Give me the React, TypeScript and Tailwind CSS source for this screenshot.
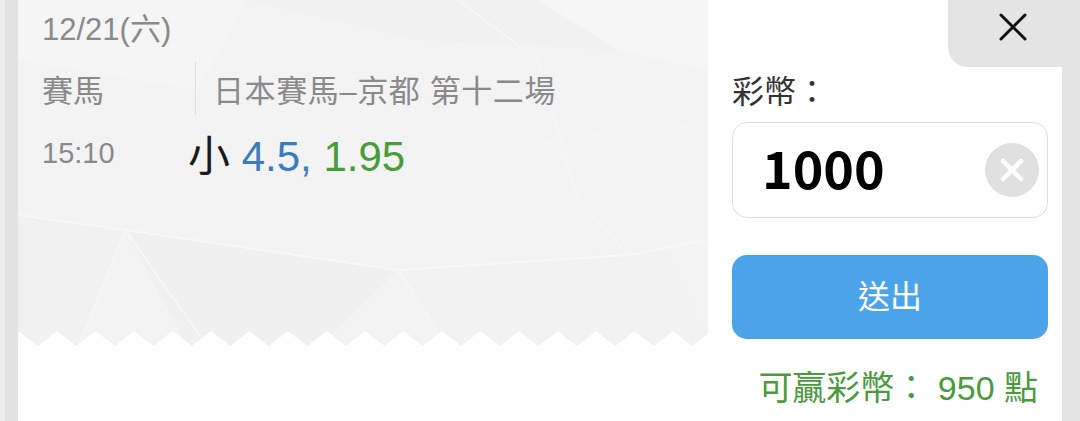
import React from 'react';

const zigzag = () => {
  // white teeth cut into the bottom of the ticket
  const w = 690;
  const period = 38.5;
  const first = 39;
  let d = 'M0 16 L0 15';
  for (let x = first - period; x < w + period; x += period) {
    d += ` L${x.toFixed(1)} 0 L${(x + period / 2).toFixed(1)} 15`;
  }
  d += ` L${w} 16 Z`;
  return d;
};

const Ticket: React.FC = () => (
  <div className="relative w-[690px] h-[347px] bg-[#f3f3f3] overflow-hidden">
    {/* faint polygon background */}
    <svg className="absolute inset-0" width="690" height="347" viewBox="0 0 690 347">
      <polygon points="0,0 230,0 180,90 0,60" fill="#f5f5f5" />
      <polygon points="230,0 520,0 600,50 400,40" fill="#f1f1f1" />
      <polygon points="520,0 690,0 690,70 600,50" fill="#f6f6f6" />
      <polygon points="0,215 107,230 60,347 0,347" fill="#f1f1f1" />
      <polygon points="107,230 380,270 300,347 170,347" fill="#f0f0f0" />
      <polygon points="380,270 650,250 690,347 430,347" fill="#f2f2f2" />
      <polygon points="520,140 690,120 690,250 650,250" fill="#f4f4f4" />
      <polyline points="0,215 107,230 380,270 610,255 690,240" fill="none" stroke="#f7f7f7" strokeWidth="2" />
      <polyline points="60,347 107,230 190,347" fill="none" stroke="#f6f6f6" strokeWidth="2" />
      <polyline points="380,270 430,347" fill="none" stroke="#f6f6f6" strokeWidth="2" />
      <polyline points="440,0 520,60 560,200 610,255" fill="none" stroke="#f6f6f6" strokeWidth="1.5" />
    </svg>
    <svg className="absolute left-0 bottom-0" width="690" height="16" viewBox="0 0 690 16">
      <path d={zigzag()} fill="#ffffff" strokeLinejoin="round" />
    </svg>

    <div className="relative flex flex-col pl-[24px] pt-[12px] text-[#8a8a8a]">
      <div className="text-[31px] leading-[36px]">12/21(六)</div>
      <div className="flex items-center h-[53px] mt-[14px]">
        <span className="w-[153px] text-[31px] leading-[36px] pt-[6px]">賽馬</span>
        <span className="w-px h-[53px] bg-[#dcdcdc]" />
        <span className="ml-[17px] text-[31px] leading-[36px] pt-[6px] tracking-[0.6px]">日本賽馬–京都 第十二場</span>
      </div>
      <div className="flex mt-[20px]">
        <span className="w-[146px] text-[29px] leading-[36px]">15:10</span>
        <span className="text-[42px] leading-[48px] -mt-[2px]">
          <span className="text-[#1a1a1a]">小</span>{' '}
          <span className="text-[#3b7bbf]">4.5,</span>{' '}
          <span className="text-[#4a9b3c]">1.95</span>
        </span>
      </div>
    </div>
  </div>
);

const App: React.FC = () => {
  return (
    <div className="w-[1080px] h-[421px] flex bg-[#e4e4e4] overflow-hidden font-['Liberation_Sans','Noto_Sans_CJK_TC',sans-serif]">
      <div className="w-[18px] h-full bg-[#e2e2e2] border-l-[5px] border-[#ececec]" />
      <div className="relative flex-1 flex bg-white">
        <Ticket />

        {/* bet panel */}
        <div className="flex-1 flex flex-col pl-[24px] pr-[14px] pt-[72px]">
          <div className="text-[32px] leading-[40px] text-[#333333]">彩幣：</div>
          <div className="mt-[10px] h-[96px] flex items-center justify-between rounded-[15px] border-[1.5px] border-[#dddddd] pl-[29px] pr-[8px]">
            <span className="font-['Noto_Sans_CJK_TC',sans-serif] text-[52px] font-bold text-black leading-none -mt-[7px]">1000</span>
            <span className="w-[54px] h-[54px] rounded-full bg-[#e0e0e0] flex items-center justify-center">
              <svg width="28" height="28" viewBox="0 0 28 28">
                <path d="M5 5 L23 23 M23 5 L5 23" stroke="#ffffff" strokeWidth="4.5" strokeLinecap="round" />
              </svg>
            </span>
          </div>
          <button className="mt-[37px] h-[84px] rounded-[15px] bg-[#4ba3e9] text-white text-[32px] flex items-center justify-center">
            送出
          </button>
          <div className="mt-[30px] pr-[10px] text-right text-[34px] leading-[38px] text-[#4a9b3c] whitespace-pre">
            可贏彩幣： 950 點
          </div>
        </div>

        {/* close tab */}
        <button className="absolute top-0 right-0 w-[114px] h-[67px] bg-[#e4e4e4] rounded-bl-[20px] flex items-center justify-center pl-[16px]">
          <svg width="30" height="30" viewBox="0 0 30 30" className="-mt-[14px]">
            <path d="M3 3 L27 27 M27 3 L3 27" stroke="#111111" strokeWidth="3" strokeLinecap="round" />
          </svg>
        </button>
      </div>
      <div className="w-[18px] h-full bg-[#e4e4e4]" />
    </div>
  );
};

export default App;
